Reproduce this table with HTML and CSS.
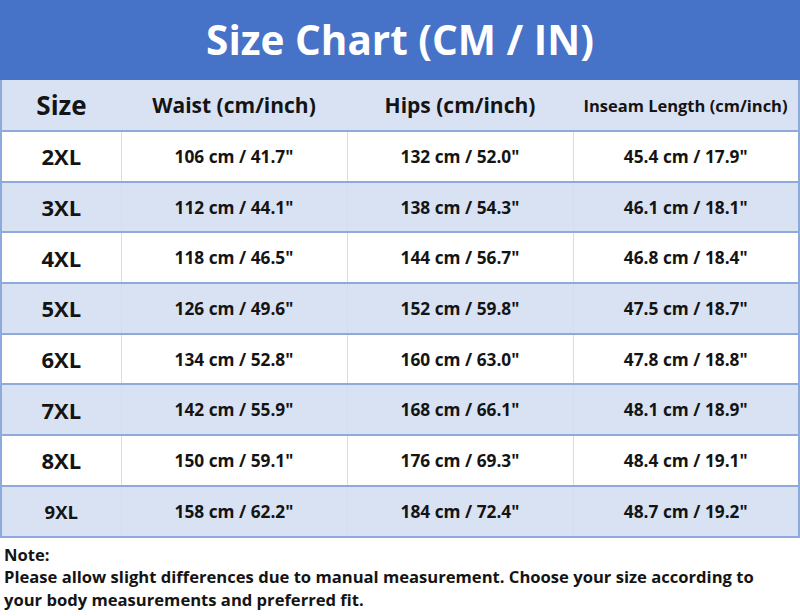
FILE: index.html
```html
<!DOCTYPE html>
<html lang="en">
<head>
<meta charset="utf-8">
<title>Size Chart</title>
<link rel="stylesheet" href="styles.css">
</head>
<body>
<div class="page">
  <h1 class="title">Size Chart (CM / IN)</h1>
  <table class="chart">
    <colgroup>
      <col class="c-size"><col class="c-val"><col class="c-val"><col class="c-val">
    </colgroup>
    <thead>
      <tr>
        <th class="h-size">Size</th>
        <th>Waist (cm/inch)</th>
        <th>Hips (cm/inch)</th>
        <th class="h-small">Inseam Length (cm/inch)</th>
      </tr>
    </thead>
    <tbody>
      <tr><td class="size">2XL</td><td>106 cm / 41.7"</td><td>132 cm / 52.0"</td><td>45.4 cm / 17.9"</td></tr>
      <tr><td class="size">3XL</td><td>112 cm / 44.1"</td><td>138 cm / 54.3"</td><td>46.1 cm / 18.1"</td></tr>
      <tr><td class="size">4XL</td><td>118 cm / 46.5"</td><td>144 cm / 56.7"</td><td>46.8 cm / 18.4"</td></tr>
      <tr><td class="size">5XL</td><td>126 cm / 49.6"</td><td>152 cm / 59.8"</td><td>47.5 cm / 18.7"</td></tr>
      <tr><td class="size">6XL</td><td>134 cm / 52.8"</td><td>160 cm / 63.0"</td><td>47.8 cm / 18.8"</td></tr>
      <tr><td class="size">7XL</td><td>142 cm / 55.9"</td><td>168 cm / 66.1"</td><td>48.1 cm / 18.9"</td></tr>
      <tr><td class="size">8XL</td><td>150 cm / 59.1"</td><td>176 cm / 69.3"</td><td>48.4 cm / 19.1"</td></tr>
      <tr><td class="size size-sm">9XL</td><td>158 cm / 62.2"</td><td>184 cm / 72.4"</td><td>48.7 cm / 19.2"</td></tr>
    </tbody>
  </table>
  <div class="note">
    <p>Note:</p>
    <p>Please allow slight differences due to manual measurement. Choose your size according to your body measurements and preferred fit.</p>
  </div>
</div>
</body>
</html>
```
FILE: styles.css
```css
* { box-sizing: border-box; }
html, body { margin: 0; padding: 0; background: #ffffff; }
body {
  font-family: "Open Sans", "Noto Sans", "Liberation Sans", sans-serif;
  font-weight: 700;
  color: #141414;
  width: 800px;
  height: 616px;
  overflow: hidden;
}
.page { width: 800px; }
.title {
  margin: 0;
  height: 80px;
  background: #4673c8;
  color: #ffffff;
  font-size: 40.5px;
  font-weight: 700;
  line-height: 80px;
  text-align: center;
  letter-spacing: 0;
}
.chart {
  width: 799px;
  border-collapse: collapse;
  table-layout: fixed;
  border-left: 2px solid #8eaadc;
  border-right: 2px solid #8eaadc;
}
.c-size { width: 120px; }
.c-val { width: 226px; }
.chart th, .chart td {
  padding: 0;
  text-align: center;
  vertical-align: middle;
}
.chart thead tr { background: #d9e2f3; height: 51px; }
.chart th {
  font-size: 21px;
  font-weight: 700;
  border-bottom: 2px solid #8eaadc;
}
.chart th.h-size { font-size: 26px; }
.chart th.h-small { font-size: 16.5px; }
.chart tbody tr { height: 50.7px; }
.chart tbody tr:nth-child(even) { background: #d9e2f3; }
.chart td {
  font-size: 17.3px;
  border-bottom: 2px solid #8eaadc;
  border-left: 1px solid #dcdcdc;
}
.chart td.size { border-left: none; font-size: 22px; }
.chart td.size-sm { font-size: 18.5px; }
.note {
  padding: 6px 4px 0;
  font-size: 16.6px;
  line-height: 22.5px;
}
.note p { margin: 0; }
```
